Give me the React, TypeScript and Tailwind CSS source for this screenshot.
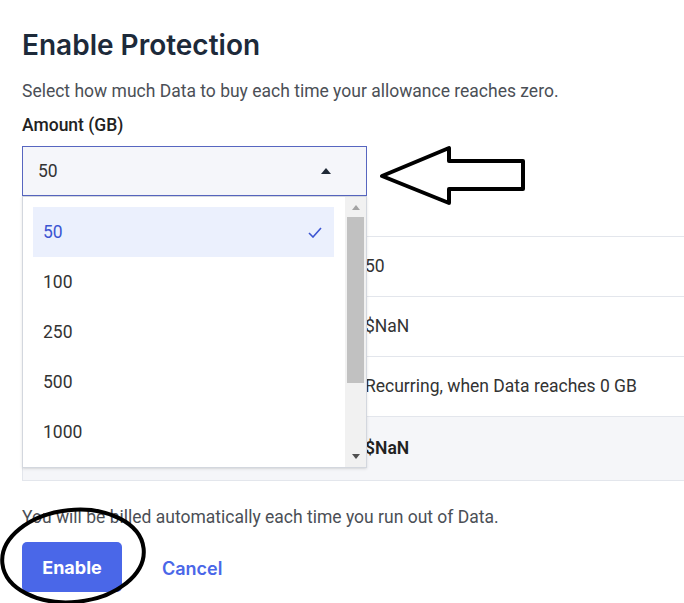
import React from 'react'

const options = ['50', '100', '250', '500', '1000']

const rows = ['50', '$NaN', 'Recurring, when Data reaches 0 GB']

function Annotations() {
  return (
    <svg className="pointer-events-none absolute left-0 top-0" width="684" height="603" viewBox="0 0 684 603">
      <polygon
        points="382,176 449,148 449,161 523,161 523,189 449,189 449,203"
        fill="none"
        stroke="black"
        strokeWidth="4"
        strokeLinejoin="round"
      />
      <ellipse cx="73" cy="556" rx="71" ry="46" fill="none" stroke="black" strokeWidth="4" transform="rotate(-6 73 556)" />
    </svg>
  )
}

export default function App() {
  return (
    <div className="relative h-[603px] w-[684px] overflow-hidden bg-white font-['Roboto',sans-serif] text-[#222]">
      <div className="pl-[22px] pt-[26px]">
        <h1 className="font-['Inter',sans-serif] text-[28px] font-semibold leading-[38px] text-[#1d2a3a]">Enable Protection</h1>
        <p className="mt-[15px] text-[17.5px] leading-[24px] text-[#4b4f56]">
          Select how much Data to buy each time your allowance reaches zero.
        </p>
        <label className="mt-[10px] block text-[17.5px] font-medium leading-[24px] text-[#222]">Amount (GB)</label>

        <div className="relative mt-[9px]">
          {/* select trigger */}
          <div className="flex h-[50px] w-[345px] items-center justify-between border border-[#5766c0] bg-[#f5f6fa] pl-[15px] pr-[35px]">
            <span className="text-[17.5px] text-[#333]">50</span>
            <svg width="10" height="6" viewBox="0 0 10 6">
              <polygon points="0,6 5,0 10,6" fill="#1f2937" />
            </svg>
          </div>

          {/* table behind */}
          <div className="mt-px w-[700px] border-l border-[#e3e6ec]">
            <div className="h-[39px]" />
            {rows.map((v) => (
              <div key={v} className="flex h-[60px] items-center border-t border-[#e3e6ec]">
                <span className="w-[342px]" />
                <span className="text-[17.5px] text-[#333]">{v}</span>
              </div>
            ))}
            <div className="flex h-[65px] items-center border-y border-[#e3e6ec] bg-[#f5f6f9]">
              <span className="w-[342px]" />
              <span className="text-[17.5px] font-semibold text-[#222]">$NaN</span>
            </div>
          </div>

          {/* dropdown list */}
          <div className="absolute left-0 top-[50px] flex h-[272px] w-[345px] border border-[#d3d7de] bg-white shadow-sm">
            <div className="flex-1 py-[10px] pl-[10px] pr-[11px]">
              {options.map((o, i) => (
                <div
                  key={o}
                  className={`flex h-[50px] items-center justify-between pl-[10px] pr-[12px] text-[17.5px] ${
                    i === 0 ? 'bg-[#ebf0fd] text-[#3c55d2]' : 'text-[#333]'
                  }`}
                >
                  <span>{o}</span>
                  {i === 0 && (
                    <svg width="14" height="11" viewBox="0 0 14 11">
                      <polyline points="1,6 5,10 13,1" fill="none" stroke="#3c55d2" strokeWidth="1.6" />
                    </svg>
                  )}
                </div>
              ))}
            </div>
            <div className="flex w-[21px] flex-col items-center bg-[#f1f1f1]">
              <svg className="mt-[8px]" width="8" height="5" viewBox="0 0 8 5">
                <polygon points="0,5 4,0 8,5" fill="#a3a3a3" />
              </svg>
              <div className="mt-[7px] h-[166px] w-[17px] bg-[#c1c1c1]" />
              <div className="flex-1" />
              <svg className="mb-[8px]" width="8" height="5" viewBox="0 0 8 5">
                <polygon points="0,0 8,0 4,5" fill="#505050" />
              </svg>
            </div>
          </div>
        </div>

        <p className="mt-[24px] text-[17.5px] leading-[24px] text-[#4b4f56]">
          You will be billed automatically each time you run out of Data.
        </p>
        <div className="mt-[13px] flex items-center gap-[40px]">
          <button className="h-[50px] w-[100px] rounded-[5px] bg-[#4a67e8] font-['Inter',sans-serif] text-[18px] font-bold text-white">
            Enable
          </button>
          <button className="pt-[2px] font-['Inter',sans-serif] text-[18px] font-semibold text-[#4a67e8]">Cancel</button>
        </div>
      </div>
      <Annotations />
    </div>
  )
}
